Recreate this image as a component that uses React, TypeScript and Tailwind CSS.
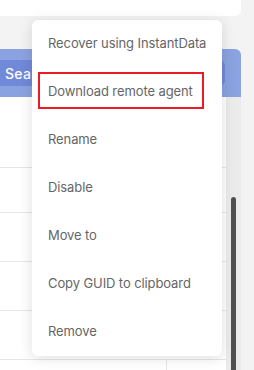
const items = [
  "Recover using InstantData",
  "Download remote agent",
  "Rename",
  "Disable",
  "Move to",
  "Copy GUID to clipboard",
  "Remove",
];

const rows = ["h-[71px]", "h-[45px]", "h-[49px]", "h-[49px]", "h-[49px]"];

const App = () => {
  return (
    <main
      className="relative w-[254px] h-[370px] overflow-hidden bg-[#f3f3f3]"
      style={{ fontFamily: "Inter, 'Open Sans', sans-serif" }}
    >
      <div className="w-[241px] h-[16px] bg-white rounded-br-md" />

      <section className="mt-[33px] w-[241px] flex flex-col">
        <div className="h-[48px] bg-[#8ba2e0] rounded-tr-md flex items-center">
          <div className="w-[225px] h-[26px] bg-[#7089d8] rounded-r-md flex items-center pl-[5px] text-[14px] tracking-[0.3px] font-medium text-white">
            Search
          </div>
        </div>
        <div className="flex">
          <div className="w-[226px] bg-white">
            {rows.map((h, i) => (
              <div key={i} className={`${h} border-b border-[#e6e6e6]`} />
            ))}
            <div className="h-[20px] flex">
              <div className="w-[167px] border-r border-[#e6e6e6]" />
            </div>
          </div>
          <div className="w-[15px] bg-[#ebebeb] pt-[100px] pl-[5px]">
            <div className="w-[5px] h-[200px] bg-[#505050] rounded-t-sm" />
          </div>
        </div>
      </section>

      <ul className="absolute left-[32px] top-[20px] w-[190px] bg-white rounded-md shadow-[0_2px_14px_rgba(0,0,0,0.13)]">
        {items.map((t) => (
          <li key={t} className="h-[48px] flex items-center pl-[16px] text-[13px] tracking-[-0.1px] text-[#666666] whitespace-nowrap">
            {t}
          </li>
        ))}
      </ul>

      <div className="absolute left-[38px] top-[72px] w-[166px] h-[37px] border-2 border-[#ec1c24]" />
    </main>
  );
};

export default App;
